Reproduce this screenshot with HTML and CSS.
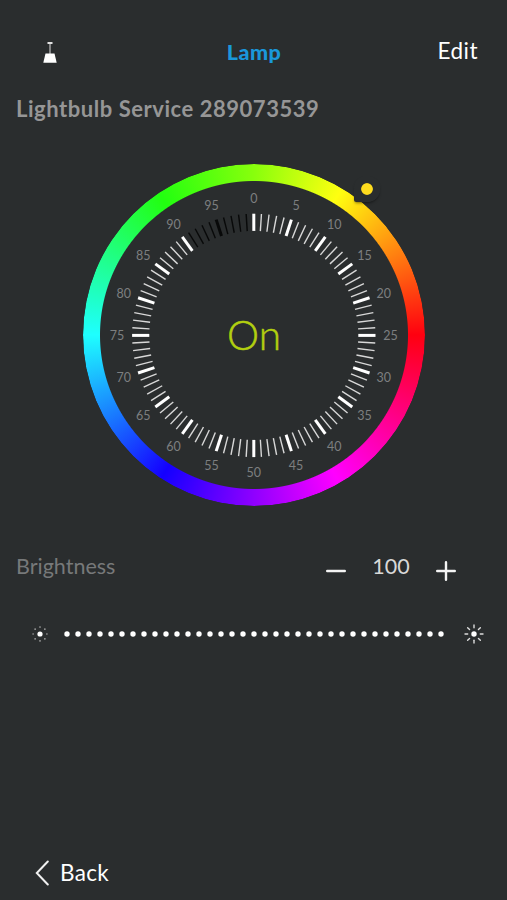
FILE: index.html
```html
<!DOCTYPE html>
<html lang="en">
<head>
    <meta charset="UTF-8">
    <meta name="viewport" content="width=device-width, initial-scale=1.0">
    <title>Lamp</title>
    <link rel="stylesheet" href="styles.css">
</head>
<body>
    <header class="top-bar">
        <svg class="lamp-icon" width="14" height="22" viewBox="0 0 14 22">
            <path d="M4.5 0h5v2h-5z" fill="#e0e0e0"/>
            <path d="M6.3 2h1.4v10H6.3z" fill="#aaa"/>
            <path d="M2.5 11.5h9L13.7 20.7H.3z" fill="#fff"/>
        </svg>
        <h1 class="title">Lamp</h1>
        <a class="edit">Edit</a>
    </header>

    <h2 class="service-name">Lightbulb Service 289073539</h2>

    <div class="dial">
        <div class="color-ring"></div>
        <svg class="scale" id="scale" width="342" height="342" viewBox="-171 -171 342 342"></svg>
        <div class="knob"></div>
        <div class="state">On</div>
    </div>

    <div class="brightness-row">
        <span class="label">Brightness</span>
        <svg class="minus" width="20" height="20" viewBox="0 0 20 20">
            <path d="M1.2 10h17.6"/>
        </svg>
        <span class="value">100</span>
        <svg class="plus" width="20" height="20" viewBox="0 0 20 20">
            <path d="M1.2 10h17.6M10 1.2v17.6"/>
        </svg>
    </div>

    <div class="slider-row">
        <svg width="20" height="20" viewBox="-10 -10 20 20">
            <circle r="2.6" fill="#fff"/>
            <g id="dimRays" fill="#aaa"></g>
        </svg>
        <svg id="dots" width="380" height="6" viewBox="0 0 380 6" fill="#fff"></svg>
        <svg width="20" height="20" viewBox="-10 -10 20 20">
            <circle r="2.7" fill="#fff"/>
            <g id="brightRays" stroke="#ddd" stroke-width="1.4" stroke-linecap="round"></g>
        </svg>
    </div>

    <footer class="back">
        <svg width="14" height="26" viewBox="0 0 14 26">
            <path d="M12.8 1.5L1.8 13L12.8 24.5"/>
        </svg>
        <span>Back</span>
    </footer>

    <script>
        const svgNS = "http://www.w3.org/2000/svg";
        const onCount = 90;

        function addShape(parent, tag, attrs, text) {
            const el = document.createElementNS(svgNS, tag);
            for (const key in attrs) el.setAttribute(key, attrs[key]);
            if (text !== undefined) el.textContent = text;
            parent.appendChild(el);
        }

        const scale = document.getElementById("scale");
        for (let i = 0; i < 100; i++) {
            const major = i % 5 === 0;
            addShape(scale, "line", {
                x1: 0, y1: -121.7, x2: 0, y2: -104.5,
                class: "tick" + (major ? " major" : "") + (i > onCount ? " off" : ""),
                transform: "translate(-0.2 0.4) rotate(" + i * 3.6 + ")"
            });
            if (major) {
                const angle = i * 3.6 * Math.PI / 180;
                addShape(scale, "text", {
                    x: Math.sin(angle) * 136.7 - 0.2,
                    y: -Math.cos(angle) * 136.7 + 5,
                    class: "number"
                }, i);
            }
        }

        for (let i = 0; i < 8; i++) {
            const turn = "rotate(" + i * 45 + ")";
            addShape(document.getElementById("dimRays"), "circle", { cx: 0, cy: -6.9, r: 0.8, transform: turn });
            addShape(document.getElementById("brightRays"), "line", { x1: 0, y1: -6.3, x2: 0, y2: -9, transform: turn });
        }

        for (let i = 0; i < 35; i++) {
            addShape(document.getElementById("dots"), "circle", { cx: 3 + i * 11, cy: 3, r: 2.7 });
        }
    </script>
</body>
</html>
```
FILE: styles.css
```css
body {
    display: flex;
    flex-direction: column;
    height: 900px;
    margin: 0;
    box-sizing: border-box;
    background-color: #2a2d2e;
    color: #fff;
    font-family: Lato, "Open Sans", sans-serif;
    overflow: hidden;
}
.top-bar {
    display: grid;
    grid-template-columns: 1fr auto 1fr;
    align-items: center;
    height: 28px;
    margin-top: 38px;
    padding: 0 29px 0 30px;
}
.lamp-icon {
    margin: 1px 0 0 13px;
}
.title {
    margin: 0;
    color: #1a98db;
    font-size: 21.5px;
    font-weight: 900;
    line-height: 28px;
    letter-spacing: 0.5px;
}
.edit {
    justify-self: end;
    font-size: 22.5px;
    line-height: 26px;
    letter-spacing: 0.5px;
    margin-top: -3px;
}
.service-name {
    margin: 29px 0 0 16px;
    color: #969696;
    font-size: 22px;
    font-weight: 700;
    line-height: 28px;
    letter-spacing: 0.54px;
    white-space: nowrap;
}
.dial {
    position: relative;
    display: grid;
    place-items: center;
    width: 342px;
    height: 342px;
    margin: 41px 0 0 83px;
}
.color-ring, .scale, .state {
    grid-area: 1 / 1;
}
.color-ring {
    width: 342px;
    height: 342px;
    border-radius: 50%;
    background: conic-gradient(#88ff0c, #ffff10 31deg, #ff0010 90deg, #ff00ff 150deg, #1400ff 213deg, #1effff 270deg, #22ff10 326deg, #88ff0c);
    -webkit-mask: radial-gradient(circle, transparent 153.5px, #000 154.5px);
    mask: radial-gradient(circle, transparent 153.5px, #000 154.5px);
}
.tick {
    stroke: #d8d8d8;
    stroke-width: 1.4;
}
.tick.major {
    stroke: #fff;
    stroke-width: 3;
}
.tick.off {
    stroke: #080909;
}
.number {
    fill: #7d7f80;
    font-size: 12.5px;
    text-anchor: middle;
}
.knob {
    position: absolute;
    left: 271px;
    top: 12px;
    width: 26px;
    height: 26px;
    border-radius: 50% 50% 50% 2px;
    background: radial-gradient(circle, #ffdc1e 5.4px, #2a2d2e 6.2px);
    box-shadow: 0 2px 3px -1px rgba(0, 0, 0, 0.5);
}
.state {
    color: #b2cf10;
    font-size: 40.5px;
    font-weight: 300;
    line-height: 50px;
    -webkit-text-stroke: 0.5px #b2cf10;
}
.brightness-row {
    display: flex;
    align-items: center;
    height: 28px;
    margin: 46px 51px 0 16px;
    font-size: 21.5px;
}
.label {
    flex: 1;
    color: #77797a;
}
.value {
    width: 90px;
    color: #d8d8d8;
    text-align: center;
}
.minus, .plus {
    margin-top: 10px;
    stroke: #f4f4f4;
    stroke-width: 2.4;
    stroke-linecap: round;
}
.slider-row {
    display: flex;
    align-items: center;
    gap: 14px;
    height: 20px;
    margin: 44px 23px 0 30px;
}
.slider-row svg:last-child {
    margin-left: auto;
}
.back {
    display: flex;
    align-items: center;
    gap: 11px;
    height: 28px;
    margin: auto 0 13px 35px;
    font-size: 22.5px;
    letter-spacing: 0.3px;
}
.back span {
    margin-top: -2px;
}
.back path {
    fill: none;
    stroke: #f0f0f0;
    stroke-width: 2;
    stroke-linecap: round;
}
```
